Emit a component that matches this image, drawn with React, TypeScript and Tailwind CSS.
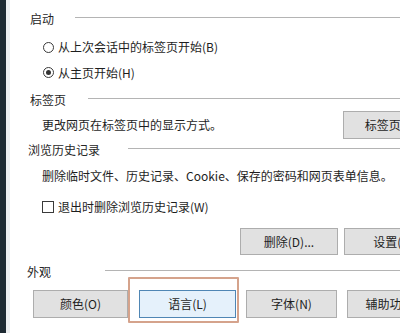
import React from "react";

const font = { fontFamily: '"Noto Sans CJK SC", "Noto Sans", sans-serif' };

function Heading({ label, labelLeft, lineLeft, h }: { label: string; labelLeft: number; lineLeft: number; h: string }) {
  return (
    <div className={`flex items-center ${h}`}>
      <div className="shrink-0" style={{ width: lineLeft, paddingLeft: labelLeft }}>
        <span className="text-[12px] leading-none text-[#262626] whitespace-nowrap">{label}</span>
      </div>
      <div className="flex-1 h-px bg-[#b4b4b4]" />
    </div>
  );
}

function Radio({ checked, label, h }: { checked?: boolean; label: string; h: string }) {
  return (
    <div className={`flex items-center pl-[33px] ${h}`}>
      <div className="w-[11px] h-[11px] rounded-full border border-[#3a3a3a] bg-white flex items-center justify-center shrink-0">
        {checked && <div className="w-[5px] h-[5px] rounded-full bg-[#333]" />}
      </div>
      <span className="ml-[4px] text-[12px] leading-none text-[#1e1e1e] whitespace-nowrap">{label}</span>
    </div>
  );
}

function Btn({ label, w, cls = "" }: { label: string; w: string; cls?: string }) {
  return (
    <div className={`shrink-0 ${w} h-full flex items-center justify-center border border-[#adadad] bg-[#e1e1e1] text-[12px] leading-none text-[#1e1e1e] whitespace-nowrap ${cls}`}>
      {label}
    </div>
  );
}

export default function App() {
  return (
    <div className="w-[400px] h-[333px] flex overflow-hidden bg-white" style={font}>
      <div className="w-[6px] h-full bg-[#1e2a33] shrink-0" />
      <div className="w-[4px] h-full bg-[#eceef0] shrink-0" />
      <div className="relative flex-1 overflow-hidden flex flex-col">
        <Heading label="启动" labelLeft={20} lineLeft={65} h="h-[34px]" />
        <Radio label="从上次会话中的标签页开始(B)" h="h-[26px]" />
        <Radio checked label="从主页开始(H)" h="h-[25px]" />
        <Heading label="标签页" labelLeft={20} lineLeft={78} h="h-[26px]" />
        <div className="flex items-center h-[28px]">
          <span className="pl-[32px] w-[333px] shrink-0 text-[12px] leading-none text-[#1e1e1e] whitespace-nowrap">
            更改网页在标签页中的显示方式。
          </span>
          <Btn label="标签页(T)" w="w-[95px]" />
        </div>
        <Heading label="浏览历史记录" labelLeft={18} lineLeft={118} h="h-[18px]" />
        <div className="flex items-center h-[38px] pl-[32px]">
          <span className="text-[12px] leading-none text-[#1e1e1e] whitespace-nowrap">
            删除临时文件、历史记录、Cookie、保存的密码和网页表单信息。
          </span>
        </div>
        <div className="flex items-center h-[24px] pl-[32px]">
          <div className="w-[12px] h-[12px] border border-[#3a3a3a] bg-white shrink-0" />
          <span className="ml-[4px] text-[12px] leading-none text-[#1e1e1e] whitespace-nowrap">
            退出时删除浏览历史记录(W)
          </span>
        </div>
        <div className="flex mt-[9px] h-[27px] pl-[230px] gap-[6px]">
          <Btn label="删除(D)..." w="w-[98px]" />
          <Btn label="设置(S)" w="w-[98px]" />
        </div>
        <Heading label="外观" labelLeft={17} lineLeft={95} h="h-[30px]" />
        <div className="flex mt-[5px] h-[28px] pl-[23px]">
          <Btn label="颜色(O)" w="w-[95px]" />
          <div className="relative shrink-0 ml-[11px] w-[97px] h-full">
            <div className="w-full h-full flex items-center justify-center border border-[#4f86b4] bg-[#e5f1fb] text-[12px] leading-none text-[#1e1e1e] whitespace-nowrap">
              语言(L)
            </div>
            <div className="absolute left-[-11px] right-[-3px] top-[-13px] bottom-[-5px] border-[2px] border-[#d5a38c] rounded-[1px]" />
          </div>
          <Btn label="字体(N)" w="w-[91px]" cls="ml-[10px]" />
          <Btn label="辅助功能(E)" w="w-[100px]" cls="ml-[10px]" />
        </div>
      </div>
    </div>
  );
}
